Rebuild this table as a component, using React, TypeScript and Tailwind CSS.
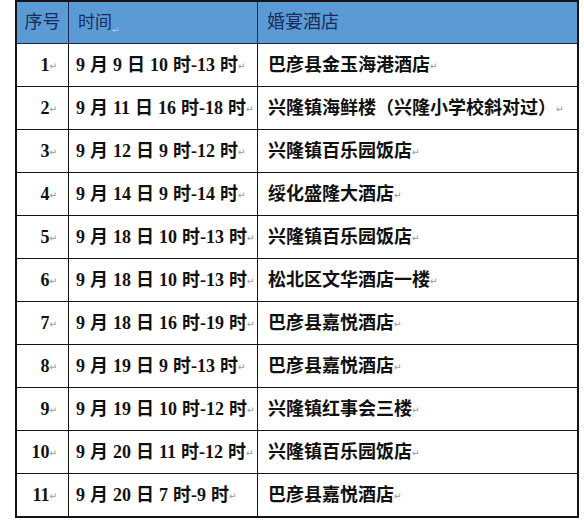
import React from "react";

const rows: [string, string, string][] = [
  ["1", "9 月 9 日 10 时-13 时", "巴彦县金玉海港酒店"],
  ["2", "9 月 11 日 16 时-18 时", "兴隆镇海鲜楼（兴隆小学校斜对过）"],
  ["3", "9 月 12 日 9 时-12 时", "兴隆镇百乐园饭店"],
  ["4", "9 月 14 日 9 时-14 时", "绥化盛隆大酒店"],
  ["5", "9 月 18 日 10 时-13 时", "兴隆镇百乐园饭店"],
  ["6", "9 月 18 日 10 时-13 时", "松北区文华酒店一楼"],
  ["7", "9 月 18 日 16 时-19 时", "巴彦县嘉悦酒店"],
  ["8", "9 月 19 日 9 时-13 时", "巴彦县嘉悦酒店"],
  ["9", "9 月 19 日 10 时-12 时", "兴隆镇红事会三楼"],
  ["10", "9 月 20 日 11 时-12 时", "兴隆镇百乐园饭店"],
  ["11", "9 月 20 日 7 时-9 时", "巴彦县嘉悦酒店"],
];

const Mark = ({ faint }: { faint?: boolean }) => (
  <span
    className={`self-end mb-[8px] text-[9px] leading-none ${faint ? "text-[#b9cde6]" : "text-[#a8a8a8]"}`}
    style={{ fontFamily: '"DejaVu Sans", sans-serif' }}
  >
    ↵
  </span>
);

export default function App() {
  const font = { fontFamily: '"Liberation Serif", "Noto Sans CJK SC", serif' };
  return (
    <div className="w-[584px] h-[520px] bg-white overflow-hidden">
      <div
        className="ml-[15px] w-[564px] border-2 border-[#141414] grid grid-cols-[52px_189px_1fr] text-[18px] text-[#111]"
        style={font}
      >
        {/* header */}
        <div className="h-[42px] bg-[#5b9bd5] border-b border-r border-[#1b2b4d] flex items-center justify-center text-[#1a2c58] text-[18px] font-normal">
          序号
        </div>
        <div className="h-[42px] bg-[#5b9bd5] border-b border-r border-[#1b2b4d] flex items-center pl-[9px] text-[#1a2c58] text-[17px] font-normal">
          时间
          <Mark faint />
        </div>
        <div className="h-[42px] bg-[#5b9bd5] border-b border-[#1b2b4d] flex items-center pl-[9px] text-[#1a2c58] text-[18px] font-normal">
          婚宴酒店
        </div>
        {rows.map((r, i) => {
          const last = i === rows.length - 1;
          const h = last ? "h-[42px]" : "h-[43px] border-b";
          return (
            <React.Fragment key={i}>
              <div className={`${h} border-r border-[#141414] flex items-center justify-end pr-[11px] font-bold`}>
                <span className="flex items-center">
                  {r[0]}
                  <Mark />
                </span>
              </div>
              <div className={`${h} border-r border-[#141414] flex items-center pl-[7px] font-bold whitespace-nowrap`}>
                <span className="flex items-center [word-spacing:0.5px]">
                  {r[1]}
                  <Mark />
                </span>
              </div>
              <div className={`${h} border-[#141414] flex items-center pl-[10px] font-semibold whitespace-nowrap`}>
                <span className="flex items-center">
                  {r[2]}
                  <Mark />
                </span>
              </div>
            </React.Fragment>
          );
        })}
      </div>
    </div>
  );
}
